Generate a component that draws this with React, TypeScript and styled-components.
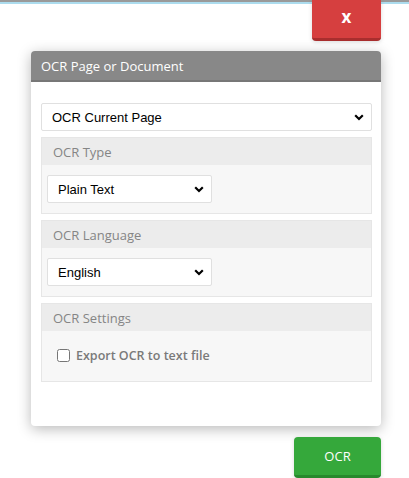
import styled, { createGlobalStyle } from 'styled-components';

const GlobalStyle = createGlobalStyle`
  html, body {
    margin: 0;
    padding: 0;
  }
  body {
    font-family: "Open Sans", "Noto Sans", sans-serif;
    background:
      linear-gradient(#9a9a9a 0 2px, #acdcee 2px 4px, transparent 4px) no-repeat,
      #fff;
  }
`;

const Page = styled.div`
  width: 409px;
  display: flex;
  flex-direction: column;
  align-items: flex-end;
`;

const TopActions = styled.div`
  display: flex;
  justify-content: flex-end;
  padding-right: 28px;
  width: 100%;
  box-sizing: border-box;
`;

type ActionButtonProps = {
  $color: string;
  $edge: string;
  $width: number;
};

const ActionButton = styled.button<ActionButtonProps>`
  width: ${p => p.$width}px;
  height: 41px;
  border: none;
  border-bottom: 3px solid ${p => p.$edge};
  border-radius: 4px;
  background: ${p => p.$color};
  color: #fff;
  font-family: "Open Sans", sans-serif;
  font-size: 13px;
  box-shadow: 0 1px 4px rgba(0, 0, 0, 0.15);
  display: flex;
  align-items: center;
  justify-content: center;
  padding: 0 0 1px;
  cursor: pointer;
`;

const CloseButton = styled(ActionButton)`
  border-top-left-radius: 0;
  border-top-right-radius: 0;
  font-size: 17px;
  font-weight: 700;
  padding-bottom: 5px;
`;

const Panel = styled.div`
  width: 350px;
  margin: 10px 28px 0 31px;
  align-self: flex-start;
  background: #fff;
  border-radius: 4px;
  box-shadow: 0 3px 14px rgba(0, 0, 0, 0.28);
  overflow: hidden;
`;

const PanelHeader = styled.div`
  height: 29px;
  background: #888;
  border-bottom: 2px solid #777;
  color: #fff;
  font-size: 13px;
  display: flex;
  align-items: center;
  padding: 0 10px;
`;

const PanelBody = styled.div`
  padding: 21px 9px 44px 10px;
  display: flex;
  flex-direction: column;
  gap: 6px;
`;

const SelectWrap = styled.div<{ $width?: number }>`
  position: relative;
  width: ${p => (p.$width ? `${p.$width}px` : '100%')};
  height: 28px;
`;

const Select = styled.select`
  appearance: none;
  width: 100%;
  height: 100%;
  box-sizing: border-box;
  border: 1px solid #e0e0e0;
  border-radius: 2px;
  background: #fff;
  color: #000;
  font-family: "Liberation Sans", Arial, sans-serif;
  font-size: 13px;
  padding: 0 24px 0 10px;
  outline: none;
`;

const Chevron = styled.svg`
  position: absolute;
  right: 8px;
  top: 11px;
  pointer-events: none;
`;

const Section = styled.div`
  border: 1px solid #e6e6e6;
  background: #f7f7f7;
`;

const SectionTitle = styled.div`
  height: 27px;
  background: #ececec;
  color: #858585;
  font-size: 13px;
  display: flex;
  align-items: center;
  padding: 0 11px;
`;

const SectionBody = styled.div`
  padding: 10px 5px;
`;

const CheckRow = styled.label`
  display: flex;
  align-items: center;
  gap: 6px;
  padding: 16px 15px 17px;
  color: #7a7a7a;
  font-size: 12.5px;
  font-weight: 600;
`;

const CheckBox = styled.input`
  margin: 0;
  width: 13px;
  height: 13px;
`;

const Footer = styled.div`
  display: flex;
  justify-content: flex-end;
  padding: 11px 28px 0 0;
  width: 100%;
  box-sizing: border-box;
`;

const ChevronIcon = () => (
  <Chevron width="10" height="7" viewBox="0 0 10 7">
    <path d="M1.2 1.3 L5 5 L8.8 1.3" fill="none" stroke="#000" strokeWidth="2.2" />
  </Chevron>
);

const Dropdown = ({ options, width }: { options: string[]; width?: number }) => (
  <SelectWrap $width={width}>
    <Select defaultValue={options[0]}>
      {options.map(o => (
        <option key={o}>{o}</option>
      ))}
    </Select>
    <ChevronIcon />
  </SelectWrap>
);

export default function App() {
  return (
    <>
      <GlobalStyle />
      <Page>
        <TopActions>
          <CloseButton $color="#d63f3f" $edge="#a92e2e" $width={69}>
            x
          </CloseButton>
        </TopActions>
        <Panel>
          <PanelHeader>OCR Page or Document</PanelHeader>
          <PanelBody>
            <Dropdown options={['OCR Current Page', 'OCR All Pages']} />
            <Section>
              <SectionTitle>OCR Type</SectionTitle>
              <SectionBody>
                <Dropdown options={['Plain Text', 'Searchable PDF']} width={165} />
              </SectionBody>
            </Section>
            <Section>
              <SectionTitle>OCR Language</SectionTitle>
              <SectionBody>
                <Dropdown options={['English', 'French', 'German', 'Spanish']} width={165} />
              </SectionBody>
            </Section>
            <Section>
              <SectionTitle>OCR Settings</SectionTitle>
              <CheckRow>
                <CheckBox type="checkbox" />
                Export OCR to text file
              </CheckRow>
            </Section>
          </PanelBody>
        </Panel>
        <Footer>
          <ActionButton $color="#35a83b" $edge="#28892d" $width={87}>
            OCR
          </ActionButton>
        </Footer>
      </Page>
    </>
  );
}
